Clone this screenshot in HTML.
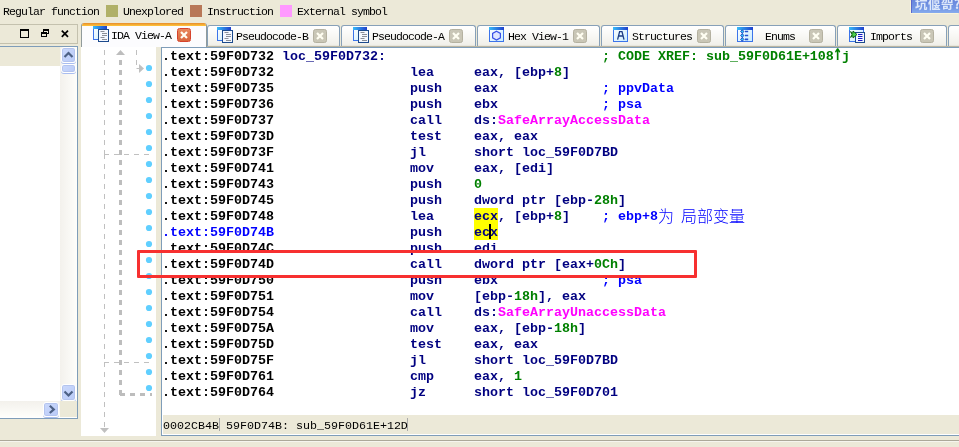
<!DOCTYPE html>
<html><head><meta charset="utf-8"><title>IDA View-A</title>
<style>
html,body{margin:0;padding:0;}
body{width:959px;height:447px;overflow:hidden;position:relative;background:#ece9d8;font-family:"Liberation Mono","Noto Sans CJK SC",monospace;}
.abs{position:absolute;}
.ui{font-family:"Liberation Mono","Noto Sans CJK SC",monospace;font-size:11.5px;letter-spacing:-0.9px;color:#000;white-space:pre;line-height:12px;}
.sw{position:absolute;top:5px;width:12px;height:12px;}
.tab{position:absolute;top:25px;height:21px;border:1px solid #87a0b8;border-bottom:none;border-radius:3px 3px 0 0;background:linear-gradient(#ffffff,#fbfbf9 30%,#f1f0ea 92%,#e4e2d8);box-sizing:border-box;}
.cls{position:absolute;top:29px;width:14px;height:14px;box-sizing:border-box;border:1px solid #b4b1a0;border-radius:2.5px;background:#c9c6b6;}
.code{position:absolute;left:162px;top:49px;font:bold 13.3333px/16px "Liberation Mono","Noto Sans CJK SC",monospace;white-space:pre;color:#000080;}
.code div{height:16px;}
.a{color:#000}.n{color:#000080}.g{color:#008000}.m{color:#ff00ff}.c{color:#0000ff}
.hl{}
.cj{font:300 16px/0 "Noto Sans CJK SC",sans-serif;position:relative;top:2px}
.sbb{box-sizing:border-box;border:1px solid #fff;border-radius:3px;background:linear-gradient(135deg,#cbd9fc,#b9caf7);box-shadow:0 0 0 1px #b4c4ee inset,0 1px 0 0 #a9bdf0}
.code .c{color:#0000ff}
.st{font:11.667px/16px "Liberation Mono",monospace;color:#000;white-space:pre;height:13px;border-right:1px solid #aaa;box-sizing:border-box}
.up{display:inline-block;width:8px;height:16px;vertical-align:top;font:bold 15px/16px "DejaVu Sans Mono",monospace;text-align:center;position:relative;text-indent:-1px;transform:scaleY(1.45);transform-origin:50% 17px}
#root{position:absolute;left:0;top:0;width:959px;height:447px;will-change:transform}
</style></head><body><div id="root">

<!-- legend -->
<div class="abs ui" style="left:3px;top:6px">Regular function</div>
<div class="sw" style="left:106px;background:#b0b068"></div>
<div class="abs ui" style="left:123px;top:6px">Unexplored</div>
<div class="sw" style="left:190px;background:#b87858"></div>
<div class="abs ui" style="left:207px;top:6px">Instruction</div>
<div class="sw" style="left:280px;background:#ff99ff"></div>
<div class="abs ui" style="left:297px;top:6px">External symbol</div>

<!-- watermark -->
<div class="abs" style="left:911px;top:0;width:48px;height:13px;background:linear-gradient(#6785db,#7396e4 60%,#86abed);border-left:1px solid #5a68cc;box-sizing:border-box;overflow:hidden;box-shadow:-1px 1px 0 #f8f4dc;"><span style="position:absolute;left:3px;top:-4px;font:bold 12.5px/16px 'Noto Sans CJK SC',sans-serif;color:#dde8fa;white-space:nowrap;letter-spacing:0.5px">坑偃哿?</span></div>


<!-- left panel title -->
<div class="abs" style="left:-1px;top:24px;width:77px;height:18px;border:1px solid #c4c1ae;box-sizing:content-box;background:#ece9d8"></div>
<svg class="abs" style="left:0;top:23px" width="80" height="22" viewBox="0 0 80 22" shape-rendering="crispEdges">
  <rect x="20.5" y="7" width="8" height="7" fill="none" stroke="#000" stroke-width="1"/>
  <rect x="20" y="6" width="9" height="2" fill="#000"/>
  <rect x="43.5" y="6.5" width="5" height="4" fill="none" stroke="#000"/>
  <rect x="43" y="6" width="6" height="2" fill="#000"/>
  <rect x="41.5" y="9.5" width="5" height="4" fill="#ece9d8" stroke="#000"/>
  <rect x="41" y="9" width="6" height="2" fill="#000"/>
  <g shape-rendering="auto"><path d="M61.8 7.6 L68 13.800 M68 7.6 L61.8 13.800" stroke="#000" stroke-width="1.7" fill="none"/></g>
</svg>

<!-- left panel -->
<div class="abs" style="left:-1px;top:46px;width:77px;height:371px;border:1px solid #7f9db9;background:#fff;box-sizing:content-box"></div>
<div class="abs" style="left:0;top:47px;width:60px;height:19px;background:#ece9d8"></div>
<!-- v scrollbar -->
<div class="abs" style="left:60px;top:47px;width:17px;height:354px;background:linear-gradient(90deg,#f3f1ec,#fefefb)"></div>
<div class="abs sbb" style="left:61px;top:47px;width:15px;height:16px"></div>
<div class="abs sbb" style="left:61px;top:64px;width:15px;height:9px"></div>
<div class="abs sbb" style="left:61px;top:384px;width:15px;height:17px"></div>
<!-- h scrollbar -->
<div class="abs" style="left:0;top:401px;width:60px;height:16px;background:linear-gradient(#f3f1ec,#fefefb)"></div>
<div class="abs sbb" style="left:43px;top:402px;width:16px;height:15px"></div>
<div class="abs" style="left:60px;top:401px;width:17px;height:16px;background:#ece9d8"></div>
<svg class="abs" style="left:59px;top:46px" width="20" height="372" viewBox="0 0 20 372">
  <path d="M5.5 11 L9.500 7 L13.500 11" stroke="#4d6185" stroke-width="2.200" fill="none"/>
  <path d="M5.5 345.500 L9.500 349.500 L13.500 345.500" stroke="#4d6185" stroke-width="2.200" fill="none"/>
</svg>
<svg class="abs" style="left:43.5px;top:402px" width="16" height="16" viewBox="0 0 16 16">
  <path d="M5.800 3.800 L9.800 7.400 L5.800 11" stroke="#4d6185" stroke-width="2.200" fill="none"/>
</svg>


<!-- icon defs -->
<svg width="0" height="0" style="position:absolute">
 <defs>
  <linearGradient id="tb" x1="0" x2="1" y1="0" y2="0"><stop offset="0" stop-color="#38bcf8"/><stop offset="1" stop-color="#1f40cc"/></linearGradient>
  <linearGradient id="wb" x1="0" x2="1" y1="0" y2="1"><stop offset="0" stop-color="#ffffff"/><stop offset="1" stop-color="#c8ecff"/></linearGradient>
  <g id="icoDoc">
    <rect x="0.5" y="1.5" width="13" height="13" fill="url(#wb)" stroke="#3c74ea"/>
    <rect x="0" y="1" width="14" height="3" fill="url(#tb)"/>
    <rect x="5.5" y="4.5" width="10" height="12" fill="#f4f8ff" stroke="#1c4a8c"/>
    <path d="M7.5 6.5h4M9 8.5h5M9 10.5h5M7.5 12.5h4M9 14.5h5" stroke="#8a8f98" stroke-width="1" fill="none"/>
  </g>
  <g id="icoWin">
    <rect x="0.5" y="1.5" width="14" height="14" fill="url(#wb)" stroke="#3c74ea"/>
    <rect x="0" y="1" width="15" height="3" fill="url(#tb)"/>
  </g>
  <g id="xw"><path d="M4 4L10 10M10 4L4 10" stroke="#fffef2" stroke-width="2.2" fill="none"/></g>
 </defs>
</svg>

<!-- tab strip base line -->
<div class="abs" style="left:81px;top:46px;width:878px;height:1px;background:#b9b5a2"></div>

<!-- inactive tabs -->
<div class="tab" style="left:207px;width:133px"></div>
<div class="tab" style="left:341px;width:135px"></div>
<div class="tab" style="left:477px;width:123px"></div>
<div class="tab" style="left:601px;width:123px"></div>
<div class="tab" style="left:725px;width:111px"></div>
<div class="tab" style="left:837px;width:110px"></div>
<div class="tab" style="left:948px;width:30px"></div>

<!-- active tab -->
<div class="abs" style="left:81px;top:23px;width:126px;height:24px;box-sizing:border-box;border:1px solid #919b9c;border-bottom:none;border-top:none;border-radius:3px 3px 0 0;background:#fcfcfe;overflow:hidden"><div style="height:3px;background:linear-gradient(#e68b2c,#ffc73c)"></div></div>

<!-- tab icons -->
<svg class="abs" style="left:93px;top:25px" width="17" height="18"><use href="#icoDoc"/></svg>
<svg class="abs" style="left:217px;top:26px" width="17" height="18"><use href="#icoDoc"/></svg>
<svg class="abs" style="left:353px;top:26px" width="17" height="18"><use href="#icoDoc"/></svg>
<svg class="abs" style="left:489px;top:26px" width="17" height="18"><use href="#icoWin"/>
  <path d="M7.5 5.2 L11.4 7.4 L11.4 11.8 L7.5 14 L3.6 11.8 L3.6 7.4 Z" fill="#dfe6ff" stroke="#3b50e6" stroke-width="1.2"/></svg>
<svg class="abs" style="left:613px;top:26px" width="17" height="18"><use href="#icoWin"/>
  <path d="M6.2 5.600h3.200M6.600 5.600 L4.600 13.600 M9 5.600 L11 13.600 M6 10h3.600" fill="none" stroke="#1d3c84" stroke-width="1.3"/></svg>
<svg class="abs" style="left:737px;top:26px" width="17" height="18">
  <rect x="0.5" y="1.5" width="15" height="14" fill="url(#wb)" stroke="#3c74ea"/>
  <rect x="0" y="1" width="16" height="3" fill="url(#tb)"/>
  <path d="M5.300 4V16" stroke="#2a56d8" stroke-width="0.8"/>
  <path d="M5.300 3.800l1.700 1.700l-1.700 1.700l-1.700 -1.700zM5.300 7.800l1.700 1.700l-1.700 1.700l-1.700 -1.700zM5.300 11.700l1.700 1.700l-1.700 1.700l-1.700 -1.700z" fill="#30c8f8" stroke="#1a3cc0" stroke-width="0.9"/>
  <path d="M8 5.500h3.200M8 9.500h3.200M8 13.400h3.200" stroke="#2050d0" stroke-width="1.6"/></svg>
<svg class="abs" style="left:849px;top:26px" width="17" height="18">
  <rect x="0.5" y="1.5" width="14" height="14" fill="url(#wb)" stroke="#3c74ea"/>
  <rect x="0" y="1" width="15" height="3" fill="url(#tb)"/>
  <rect x="6.500" y="6.500" width="9" height="10" fill="#f4f8ff" stroke="#1c4a8c"/>
  <path d="M9 8.500h4.500M9 10.500h4.500M9 12.500h4.500M9 14.500h4.500" stroke="#1818c8" stroke-width="1.2"/>
  <path d="M1.500 5.600 L4 7.300 L4 5 L8 8.500 L4 12 L4 9.700 L1.500 11.400 L3 8.500 Z" fill="#4cd44c" stroke="#0a5a0a" stroke-width="0.9"/></svg>

<!-- tab labels -->
<div class="abs ui" style="left:111px;top:30px">IDA View-A</div>
<div class="abs ui" style="left:236px;top:31px">Pseudocode-B</div>
<div class="abs ui" style="left:372px;top:31px">Pseudocode-A</div>
<div class="abs ui" style="left:508px;top:31px">Hex View-1</div>
<div class="abs ui" style="left:632px;top:31px">Structures</div>
<div class="abs ui" style="left:765px;top:31px">Enums</div>
<div class="abs ui" style="left:870px;top:31px">Imports</div>

<!-- close buttons -->
<div class="cls" style="left:177px;top:28px;background:linear-gradient(#e9885c,#d8663c);border-color:#d6432c"></div>
<div class="cls" style="left:313px"></div>
<div class="cls" style="left:449px"></div>
<div class="cls" style="left:573px"></div>
<div class="cls" style="left:697px"></div>
<div class="cls" style="left:809px"></div>
<div class="cls" style="left:920px"></div>
<svg class="abs" style="left:177px;top:28px" width="14" height="14"><use href="#xw"/></svg>
<svg class="abs" style="left:313px;top:29px" width="14" height="14"><use href="#xw"/></svg>
<svg class="abs" style="left:449px;top:29px" width="14" height="14"><use href="#xw"/></svg>
<svg class="abs" style="left:573px;top:29px" width="14" height="14"><use href="#xw"/></svg>
<svg class="abs" style="left:697px;top:29px" width="14" height="14"><use href="#xw"/></svg>
<svg class="abs" style="left:809px;top:29px" width="14" height="14"><use href="#xw"/></svg>
<svg class="abs" style="left:920px;top:29px" width="14" height="14"><use href="#xw"/></svg>


<!-- arrows panel -->
<div class="abs" style="left:81px;top:47px;width:75px;height:389px;background:#fff"></div>
<svg class="abs" style="left:81px;top:47px" width="76" height="389" viewBox="0 0 76 389">
 <g shape-rendering="crispEdges" fill="none">
  <!-- thin dashed verticals -->
  <path d="M23.5 3V107" stroke="#c0c0c0" stroke-width="1" stroke-dasharray="5 5"/><path d="M23.5 107V315" stroke="#c0c0c0" stroke-width="1" stroke-dasharray="5 5"/><path d="M23.5 315V381" stroke="#c0c0c0" stroke-width="1" stroke-dasharray="5 5"/>
  <path d="M55.5 3V21" stroke="#c0c0c0" stroke-width="1" stroke-dasharray="5 5"/>
  <!-- thin dashed horizontals -->
  <path d="M23 107.500H68" stroke="#c0c0c0" stroke-width="1" stroke-dasharray="5 5"/>
  <path d="M23 315.500H68" stroke="#c0c0c0" stroke-width="1" stroke-dasharray="5 5"/>
  <!-- thick dashed -->
  <path d="M39.5 13V348" stroke="#bdbdbd" stroke-width="3" stroke-dasharray="5 5"/>
  <path d="M39 347.500H71" stroke="#bdbdbd" stroke-width="3" stroke-dasharray="5 5"/>
 </g>
 <path d="M35 8 L39.5 3 L44 8 Z" fill="#bdbdbd"/>
 <path d="M55.5 21.500 H58" stroke="#c0c0c0" fill="none"/>
 <path d="M58 17 L63 21.500 L58 26 Z" fill="#c0c0c0"/>
 <path d="M19 381 L28 381 L23.500 386 Z" fill="#c0c0c0"/>
 <g fill="#60cfff"><circle cx="68" cy="21" r="3.1"/><circle cx="68" cy="37" r="3.1"/><circle cx="68" cy="53" r="3.1"/><circle cx="68" cy="69" r="3.1"/><circle cx="68" cy="85" r="3.1"/><circle cx="68" cy="101" r="3.1"/><circle cx="68" cy="117" r="3.1"/><circle cx="68" cy="133" r="3.1"/><circle cx="68" cy="149" r="3.1"/><circle cx="68" cy="165" r="3.1"/><circle cx="68" cy="181" r="3.1"/><circle cx="68" cy="197" r="3.1"/><circle cx="68" cy="213" r="3.1"/><circle cx="68" cy="229" r="3.1"/><circle cx="68" cy="245" r="3.1"/><circle cx="68" cy="261" r="3.1"/><circle cx="68" cy="277" r="3.1"/><circle cx="68" cy="293" r="3.1"/><circle cx="68" cy="309" r="3.1"/><circle cx="68" cy="325" r="3.1"/><circle cx="68" cy="341" r="3.1"/></g>
</svg>

<!-- separator bar -->
<div class="abs" style="left:156px;top:47px;width:5px;height:389px;background:#ece9d8"></div>
<!-- code area -->
<div class="abs" style="left:161px;top:47px;width:810px;height:387px;border:1px solid #7f9db9;background:#fff;box-sizing:content-box"></div>
<div class="abs" style="left:474px;top:208px;width:24px;height:32px;background:#ffff00"></div>
<div class="code"><div class="a">.text:59F0D732 <span class="n">loc_59F0D732:</span>                           <span class="g">; CODE XREF: sub_59F0D61E+108<span class="up">↑</span>j</span></div><div class="a">.text:59F0D732                 <span class="n">lea     eax, [ebp+<span class="g">8</span>]</span></div><div class="a">.text:59F0D735                 <span class="n">push    eax</span>             <span class="c">; ppvData</span></div><div class="a">.text:59F0D736                 <span class="n">push    ebx</span>             <span class="c">; psa</span></div><div class="a">.text:59F0D737                 <span class="n">call    ds:<span class="m">SafeArrayAccessData</span></span></div><div class="a">.text:59F0D73D                 <span class="n">test    eax, eax</span></div><div class="a">.text:59F0D73F                 <span class="n">jl      short loc_59F0D7BD</span></div><div class="a">.text:59F0D741                 <span class="n">mov     eax, [edi]</span></div><div class="a">.text:59F0D743                 <span class="n">push    <span class="g">0</span></span></div><div class="a">.text:59F0D745                 <span class="n">push    dword ptr [ebp-<span class="g">28h</span>]</span></div><div class="a">.text:59F0D748                 <span class="n">lea     <span class="hl">ecx</span>, [ebp+<span class="g">8</span>]</span>    <span class="c">; ebp+8<span class="cj">为</span> <span class="cj" style="left:-1px">局部变量</span></span></div><div class="c">.text:59F0D74B                 <span class="n">push    <span class="hl">ecx</span></span></div><div class="a">.text:59F0D74C                 <span class="n">push    edi</span></div><div class="a">.text:59F0D74D                 <span class="n">call    dword ptr [eax+<span class="g">0Ch</span>]</span></div><div class="a">.text:59F0D750                 <span class="n">push    ebx</span>             <span class="c">; psa</span></div><div class="a">.text:59F0D751                 <span class="n">mov     [ebp-<span class="g">18h</span>], eax</span></div><div class="a">.text:59F0D754                 <span class="n">call    ds:<span class="m">SafeArrayUnaccessData</span></span></div><div class="a">.text:59F0D75A                 <span class="n">mov     eax, [ebp-<span class="g">18h</span>]</span></div><div class="a">.text:59F0D75D                 <span class="n">test    eax, eax</span></div><div class="a">.text:59F0D75F                 <span class="n">jl      short loc_59F0D7BD</span></div><div class="a">.text:59F0D761                 <span class="n">cmp     eax, <span class="g">1</span></span></div><div class="a">.text:59F0D764                 <span class="n">jz      short loc_59F0D701</span></div></div>
<div class="abs" style="left:489px;top:224px;width:2px;height:15px;background:#000"></div>
<!-- red box -->
<div class="abs" style="left:137px;top:250px;width:560px;height:28px;box-sizing:border-box;border:3px solid #f73030;border-radius:1px"></div>

<!-- status line -->
<div class="abs" style="left:163px;top:415px;width:800px;height:19px;background:#ece9d8"></div>
<div class="abs st" style="left:163px;top:418px;width:57px;">0002CB4B</div>
<div class="abs st" style="left:220px;top:418px;width:188px;padding-left:6px">59F0D74B: sub_59F0D61E+12D</div>

<!-- bottom lines -->
<div class="abs" style="left:0;top:440px;width:959px;height:1px;background:#aca899"></div>
<div class="abs" style="left:0;top:441px;width:959px;height:1px;background:#f6f5ee"></div>

</div></body></html>
